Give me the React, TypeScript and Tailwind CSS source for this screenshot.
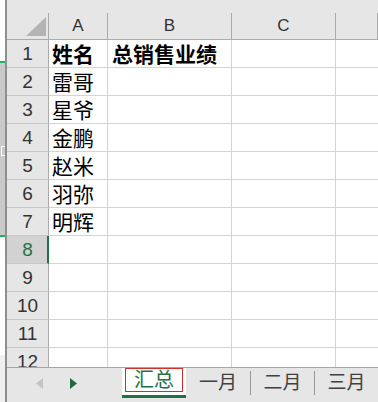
import React from 'react';

const cjk = "font-['Liberation_Sans','Noto_Sans_CJK_SC',sans-serif]";

const names = ['雷哥', '星爷', '金鹏', '赵米', '羽弥', '明辉'];

const rows: { n: number; a?: string; b?: string; bold?: boolean }[] = [
  { n: 1, a: '姓名', b: '总销售业绩', bold: true },
  ...names.map((a, i) => ({ n: i + 2, a })),
  { n: 8 },
  { n: 9 },
  { n: 10 },
  { n: 11 },
  { n: 12 },
];

const cols = ['A', 'B', 'C', ''];

export default function App() {
  return (
    <div className={`flex h-[402px] w-[378px] overflow-hidden bg-white ${cjk}`}>
      {/* 左侧残留窗口 */}
      <div className="flex w-[5px] flex-col">
        <div className="h-[61px] bg-white" />
        <div className="h-[2px] bg-[#1fb35e]" />
        <div className="flex h-[172px] items-center justify-center bg-[#c9c9c9]">
          <div className="mt-[4px] h-[10px] w-[4px] border border-r-0 border-white" />
        </div>
        <div className="h-[2px] bg-[#1fb35e]" />
        <div className="h-[118px] bg-white" />
        <div className="flex-1 bg-[#f0f0f0]" />
      </div>
      <div className="w-[2px] bg-[#8e8e8e]" />

      {/* シート本体 */}
      <div className="flex flex-1 flex-col">
        <div className="h-[13px] bg-[#e6e6e6]" />
        <div className="h-[354px] overflow-hidden">
          <div className="grid grid-cols-[42px_59px_124px_104px_1fr]">
            {/* 列ヘッダー */}
            <div className="relative h-[27px] border-b border-r border-[#ababab] bg-[#e6e6e6]">
              <svg className="absolute left-[19px] top-[4px]" width="20" height="19" viewBox="0 0 20 19">
                <polygon points="20,0 20,19 0,19" fill="#b4b4b4" />
              </svg>
            </div>
            {cols.map((c, i) => (
              <div
                key={i}
                className="flex h-[27px] items-end justify-center border-b border-r border-[#ababab] bg-[#e6e6e6] pb-[2px] text-[17px] leading-[22px] text-[#333]"
              >
                {c}
              </div>
            ))}

            {rows.map((r) => {
              const sel = r.n === 8;
              return (
                <React.Fragment key={r.n}>
                  <div
                    className={`flex h-[28px] items-center justify-center border-b border-[#c8c8c8] pt-[1px] text-[19px] ${
                      sel
                        ? 'border-r-2 border-r-[#217346] bg-[#d2d2d2] pl-[1px] text-[#217346]'
                        : 'border-r border-r-[#ababab] bg-[#e6e6e6] text-[#333]'
                    }`}
                  >
                    {r.n}
                  </div>
                  <div
                    className={`flex h-[28px] items-center whitespace-nowrap border-b border-r border-[#d4d4d4] pl-[3px] pt-[3px] text-[21px] leading-[24px] text-black ${
                      r.bold ? 'font-bold' : ''
                    }`}
                  >
                    {r.a}
                  </div>
                  <div className="flex h-[28px] items-center whitespace-nowrap border-b border-r border-[#d4d4d4] pl-[4px] pt-[3px] text-[21px] leading-[24px] font-bold text-black">
                    {r.b}
                  </div>
                  <div className="h-[28px] border-b border-r border-[#d4d4d4]" />
                  <div className="h-[28px] border-b border-[#d4d4d4]" />
                </React.Fragment>
              );
            })}
          </div>
        </div>

        {/* シートタブ */}
        <div className="flex h-[35px] border-t border-[#a6a6a6] bg-[#e6e6e6]">
          <div className="flex w-[115px] items-start gap-[27px] pl-[29px] pt-[10px]">
            <svg width="7" height="11" viewBox="0 0 7 11">
              <polygon points="7,0 7,11 0,5.5" fill="#c4c4c4" />
            </svg>
            <svg width="7" height="11" viewBox="0 0 7 11">
              <polygon points="0,0 0,11 7,5.5" fill="#1d6b3a" />
            </svg>
          </div>
          <div className="flex h-[30px] w-[64px] flex-col bg-white">
            <div className="mx-[3px] flex h-[24px] items-center justify-center border border-[#d0312d] text-[20px] leading-[24px] text-[#217346]">
              汇总
            </div>
            <div className="mt-[3px] h-[3px] bg-[#217346]" />
          </div>
          <div className="flex h-[30px] items-center">
            <div className="flex w-[64px] items-center justify-center text-[19px] leading-[24px] text-[#404040]">一月</div>
            <div className="h-[24px] w-px bg-[#9a9a9a]" />
            <div className="flex w-[63px] items-center justify-center text-[19px] leading-[24px] text-[#404040]">二月</div>
            <div className="h-[24px] w-px bg-[#9a9a9a]" />
            <div className="flex w-[63px] items-center justify-center text-[19px] leading-[24px] text-[#404040]">三月</div>
          </div>
        </div>
      </div>
    </div>
  );
}
